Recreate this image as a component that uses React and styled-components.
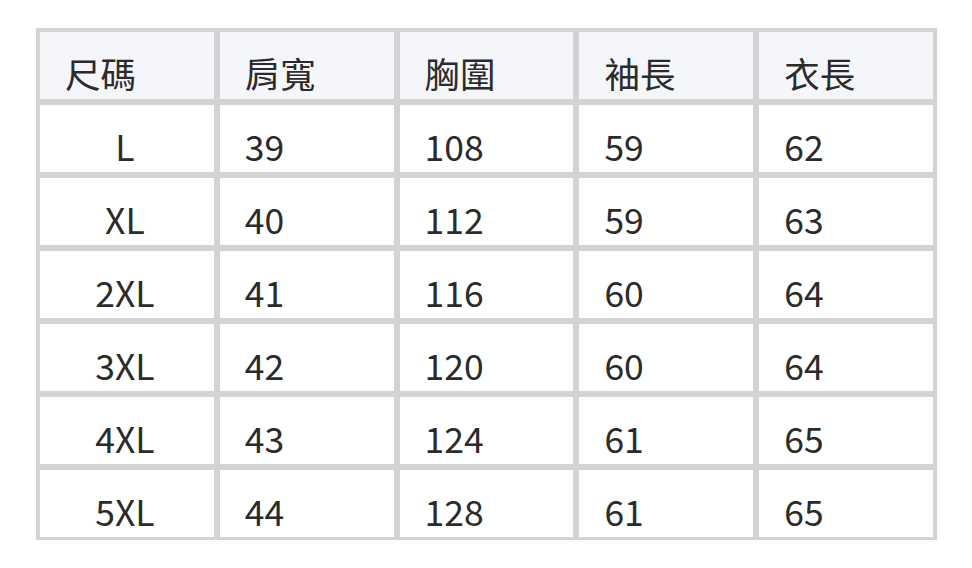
import React from "react";
import styled, { createGlobalStyle } from "styled-components";

const GlobalStyle = createGlobalStyle`
  html, body {
    margin: 0;
    padding: 0;
    background: #ffffff;
  }
  body {
    font-family: "Noto Sans CJK TC", "Noto Sans", sans-serif;
    color: #2b2b2b;
  }
`;

const headers = ["尺碼", "肩寬", "胸圍", "袖長", "衣長"];

const rows = [
  ["L", "39", "108", "59", "62"],
  ["XL", "40", "112", "59", "63"],
  ["2XL", "41", "116", "60", "64"],
  ["3XL", "42", "120", "60", "64"],
  ["4XL", "43", "124", "61", "65"],
  ["5XL", "44", "128", "61", "65"],
];

const App = () => {
  return (
    <Page>
      <GlobalStyle />
      <SizeTable>
        {headers.map((title) => (
          <HeadCell key={title}>{title}</HeadCell>
        ))}
        {rows.map((row) =>
          row.map((value, index) => (
            <Cell key={row[0] + index} $first={index === 0}>
              {value}
            </Cell>
          ))
        )}
      </SizeTable>
    </Page>
  );
};

export default App;

const Page = styled.main`
  padding: 28px 0 0 36px;
`;

const SizeTable = styled.div`
  width: 893px;
  display: grid;
  grid-template-columns: repeat(5, 1fr);
  grid-auto-rows: 67px;
  gap: 6px;
  padding: 4px 4px 3px 4px;
  background: #d3d3d3;
`;

const BaseCell = styled.div`
  display: flex;
  align-items: flex-end;
  padding: 0 24px 4px 25px;
  font-size: 35.5px;
  line-height: 44px;
  color: #2b2b2b;
`;

const HeadCell = styled(BaseCell)`
  background: #f5f6fa;
`;

const Cell = styled(BaseCell)`
  background: #ffffff;
  justify-content: ${(p) => (p.$first ? "center" : "flex-start")};
  padding-left: ${(p) => (p.$first ? "20px" : "25px")};
`;
